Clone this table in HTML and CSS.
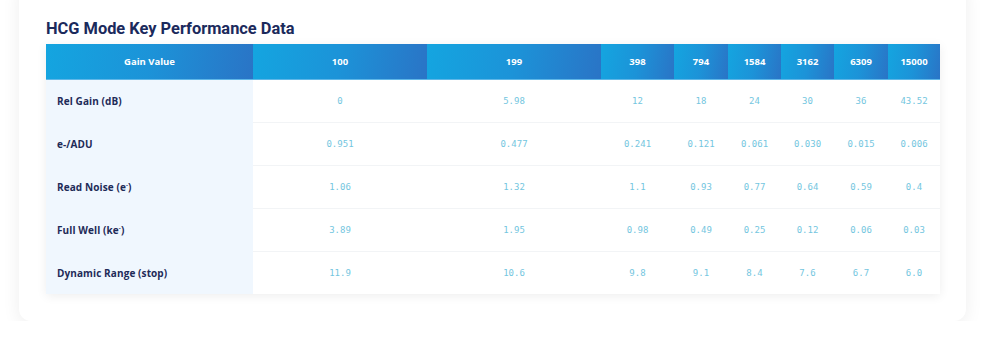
FILE: index.html
```html
<!DOCTYPE html>
<html>
<head>
<meta charset="utf-8">
<link rel="stylesheet" href="styles.css">
</head>
<body>
<div class="card">
  <h2 class="title">HCG Mode Key Performance Data</h2>
  <table class="data">
    <colgroup>
      <col style="width:207px"><col style="width:174px"><col style="width:174px"><col style="width:73px"><col style="width:54px"><col style="width:53px"><col style="width:53px"><col style="width:54px"><col style="width:52px">
    </colgroup>
    <thead>
      <tr><th>Gain Value</th><th>100</th><th>199</th><th>398</th><th>794</th><th>1584</th><th>3162</th><th>6309</th><th>15000</th></tr>
    </thead>
    <tbody>
      <tr><td class="lbl">Rel Gain (dB)</td><td>0</td><td>5.98</td><td>12</td><td>18</td><td>24</td><td>30</td><td>36</td><td>43.52</td></tr>
      <tr><td class="lbl">e-/ADU</td><td>0.951</td><td>0.477</td><td>0.241</td><td>0.121</td><td>0.061</td><td>0.030</td><td>0.015</td><td>0.006</td></tr>
      <tr><td class="lbl">Read Noise (e<sup>-</sup>)</td><td>1.06</td><td>1.32</td><td>1.1</td><td>0.93</td><td>0.77</td><td>0.64</td><td>0.59</td><td>0.4</td></tr>
      <tr><td class="lbl">Full Well (ke<sup>-</sup>)</td><td>3.89</td><td>1.95</td><td>0.98</td><td>0.49</td><td>0.25</td><td>0.12</td><td>0.06</td><td>0.03</td></tr>
      <tr><td class="lbl">Dynamic Range (stop)</td><td>11.9</td><td>10.6</td><td>9.8</td><td>9.1</td><td>8.4</td><td>7.6</td><td>6.7</td><td>6.0</td></tr>
    </tbody>
  </table>
</div>
</body>
</html>
```
FILE: styles.css
```css
html, body {
  margin: 0;
  padding: 0;
  background: #ffffff;
}
.card {
  margin: -20px 0 0 19px;
  width: 947px;
  box-sizing: border-box;
  padding: 39px 26px 27px 27px;
  background: #fff;
  border-radius: 12px;
  box-shadow: 0 4px 18px rgba(0, 0, 0, 0.07);
}
.title {
  margin: 0 0 5px 0;
  font-family: Roboto, "Liberation Sans", sans-serif;
  font-weight: 700;
  font-size: 16.4px;
  line-height: 20px;
  color: #1b2a5c;
}
.data {
  width: 894px;
  table-layout: fixed;
  border-collapse: collapse;
  box-shadow: 0 2px 10px rgba(0, 0, 0, 0.07);
  background: #fff;
}
.data th {
  height: 35px;
  padding: 0;
  background: linear-gradient(100deg, #14a5e0 0%, #1c93d8 50%, #2a74c6 100%);
  color: #fff;
  font-family: "Open Sans", "Liberation Sans", sans-serif;
  font-weight: 700;
  font-size: 9.5px;
  text-align: center;
  border-bottom: 1px solid #5fb7e8;
}
.data td {
  height: 42px;
  padding: 0;
  text-align: center;
  font-family: "DejaVu Sans Mono", "Liberation Mono", monospace;
  font-size: 9px;
  color: #74c6e0;
  border-top: 1px solid #f2f4f6;
}
.data tbody tr:first-child td {
  border-top: none;
}
.data td.lbl {
  text-align: left;
  padding-left: 11px;
  background: #f0f7fe;
  font-family: "Open Sans", "Liberation Sans", sans-serif;
  font-weight: 700;
  font-size: 10px;
  letter-spacing: 0.1px;
  color: #1e2b58;
  border-top-color: #f0f7fe;
}
.data td.lbl sup {
  font-size: 6px;
  vertical-align: 4px;
  line-height: 0;
}
```
